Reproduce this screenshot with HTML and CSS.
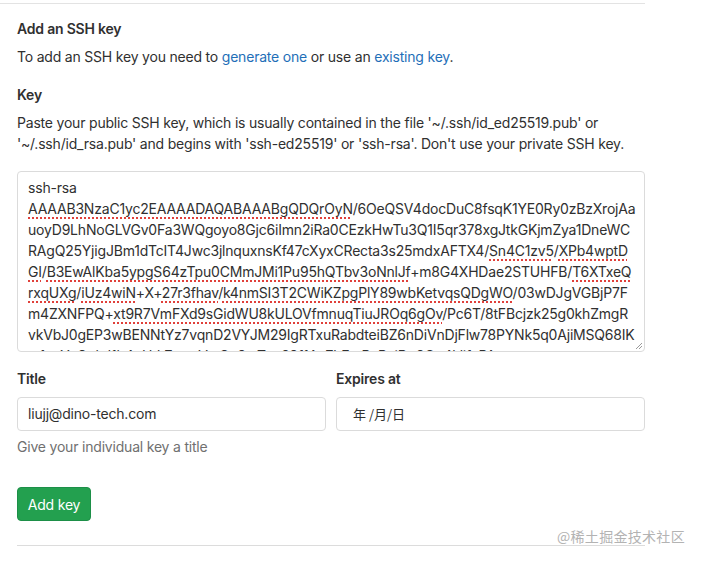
FILE: index.html
```html
<!DOCTYPE html>
<html lang="en">
<head>
<meta charset="utf-8">
<title>Add an SSH key</title>
<link rel="stylesheet" href="styles.css">
</head>
<body>
<div class="page">
  <section class="panel">
    <h4 class="heading">Add an SSH key</h4>
    <p class="intro">To add an SSH key you need to <a href="#" class="link">generate one</a> or use an <a href="#" class="link">existing key</a>.</p>

    <label class="label key-label">Key</label>
    <p class="desc">Paste your public SSH key, which is usually contained in the file '~/.ssh/id_ed25519.pub' or '~/.ssh/id_rsa.pub' and begins with 'ssh-ed25519' or 'ssh-rsa'. Don't use your private SSH key.</p>

    <div class="textarea">
      <div class="line">ssh-rsa</div>
      <div class="line"><span class="sp">AAAAB3NzaC1yc2EAAAADAQABAAABgQDQrOyN</span>/6OeQSV4docDuC8fsqK1YE0Ry0zBzXrojAa</div>
      <div class="line">uoyD9LhNoGLVGv0Fa3WQgoyo8Gjc6iImn2iRa0CEzkHwTu3Q1I5qr378xgJtkGKjmZya1DneWC</div>
      <div class="line">RAgQ25YjigJBm1dTcIT4Jwc3jlnquxnsKf47cXyxCRecta3s25mdxAFTX4/<span class="sp">Sn4C1zv5</span>/<span class="sp">XPb4wptD</span></div>
      <div class="line"><span class="sp">GI</span>/<span class="sp">B3EwAlKba5ypgS64zTpu0CMmJMi1Pu95hQTbv3oNnlJf</span>+m8G4XHDae2STUHFB/<span class="sp">T6XTxeQ</span></div>
      <div class="line"><span class="sp">rxqUXg</span>/<span class="sp">iUz4wiN</span>+X+<span class="sp">27r3fhav</span>/<span class="sp">k4nmSI3T2CWiKZpgPlY89wbKetvqsQDgWO</span>/03wDJgVGBjP7F</div>
      <div class="line">m4ZXNFPQ+<span class="sp">xt9R7VmFXd9sGidWU8kULOVfmnuqTiuJROq6gOv</span>/Pc6T/8tFBcjzk25g0khZmgR</div>
      <div class="line">vkVbJ0gEP3wBENNtYz7vqnD2VYJM29IgRTxuRabdteiBZ6nDiVnDjFlw78PYNk5q0AjiMSQ68IK</div>
      <div class="line">m1uuYoGgkd1b4qHtL7eymVwQe9mTnu29f1Ax7hEmRvRcjDg9Oq4klifxPAs</div>
      <svg class="grip" width="8" height="8" viewBox="0 0 8 8"><path d="M7 1L1 7M7 4L4 7" stroke="#9a9a9a" stroke-width="1" fill="none"/></svg>
    </div>

    <div class="row">
      <div class="field">
        <label class="label">Title</label>
        <div class="input">liujj@dino-tech.com</div>
        <p class="help">Give your individual key a title</p>
      </div>
      <div class="field">
        <label class="label">Expires at</label>
        <div class="input date">年 /月/日</div>
      </div>
    </div>

    <button class="btn">Add key</button>
  </section>
  <div class="watermark">@稀土掘金技术社区</div>
</div>
</body>
</html>
```

FILE: styles.css
```css
* { box-sizing: border-box; }
html, body { margin: 0; padding: 0; background: #fff; }
body {
  font-family: Inter, "Liberation Sans", "Noto Sans CJK SC", sans-serif;
  font-size: 14px;
  letter-spacing: -0.2px;
  color: #303030;
}
.page {
  position: relative;
  width: 705px;
  height: 561px;
  padding-top: 3px;
}
.panel {
  width: 645px;
  border-top: 1px solid #e3e3e3;
  padding: 15px 0 0 17px;
}
.panel > * { width: 628px; }
.heading {
  margin: 0;
  font-size: 14px;
  font-weight: 600;
  line-height: 20px;
}
.intro {
  margin: 8px 0 0;
  line-height: 20px;
}
.link { color: #1f6fb8; text-decoration: none; }
.label {
  display: block;
  font-weight: 600;
  line-height: 20px;
}
.key-label { margin-top: 18px; }
.desc {
  margin: 7px 0 0;
  line-height: 21px;
}
.textarea {
  position: relative;
  margin-top: 17px;
  height: 181px;
  border: 1px solid #dbdbdb;
  border-radius: 4px;
  padding: 5px 10px 0;
  overflow: hidden;
  line-height: 21px;
  white-space: nowrap;
}
.sp {
  text-decoration: underline dotted #e0403a;
  text-underline-offset: 3px;
  text-decoration-thickness: 2px;
}
.grip {
  position: absolute;
  right: 1px;
  bottom: 1px;
}
.row {
  display: flex;
  gap: 10px;
  margin-top: 17px;
}
.field { flex: 1; }
.input {
  margin-top: 8px;
  height: 34px;
  border: 1px solid #dbdbdb;
  border-radius: 4px;
  padding: 0 10px;
  line-height: 32px;
}
.date {
  padding-left: 16px;
  font-family: "Noto Sans CJK SC", sans-serif;
  font-size: 13px;
  letter-spacing: 0;
}
.help {
  margin: 6px 0 0;
  color: #707070;
  line-height: 20px;
}
.btn {
  display: block;
  width: 74px;
  height: 34px;
  margin-top: 30px;
  padding: 0;
  border: 1px solid #1d8f48;
  border-radius: 4px;
  background: #23a04f;
  color: #fff;
  font-family: inherit;
  font-size: 14px;
  letter-spacing: -0.2px;
}
.panel::after {
  content: "";
  display: block;
  width: 628px;
  margin-top: 24px;
  border-top: 1px solid #dcdcdc;
}
.watermark {
  position: absolute;
  left: 557px;
  top: 526px;
  font-family: "Noto Sans CJK SC", sans-serif;
  font-size: 14px;
  color: #b3b3b3;
  letter-spacing: 0.3px;
}
```
